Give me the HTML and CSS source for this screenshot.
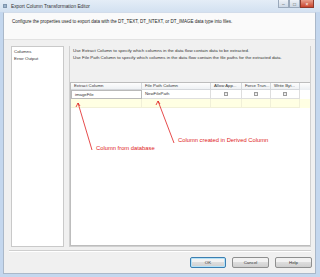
FILE: index.html
```html
<!DOCTYPE html>
<html lang="en">
<head>
<meta charset="utf-8">
<link rel="stylesheet" href="styles.css">
</head>
<body>
<div class="window">
  <div class="titlebar">
    <span class="appicon"></span>
    <span class="title">Export Column Transformation Editor</span>
    <div class="controls">
      <span class="ctl">&#8211;</span>
      <span class="ctl">&#9633;</span>
      <span class="ctl close">&#215;</span>
    </div>
  </div>
  <div class="client">
    <div class="desc">Configure the properties used to export data with the DT_TEXT, DT_NTEXT, or DT_IMAGE data type into files.</div>
    <div class="main">
      <div class="navlist">
        <div>Columns</div>
        <div>Error Output</div>
      </div>
      <div class="panel">
        <div class="panel-text">
          <div>Use Extract Column to specify which columns in the data flow contain data to be extracted.</div>
          <div>Use File Path Column to specify which columns in the data flow contain the file paths for the extracted data.</div>
        </div>
        <div class="grid">
          <div class="row head">
            <div class="cell">Extract Column</div>
            <div class="cell">File Path Column</div>
            <div class="cell">Allow App...</div>
            <div class="cell">Force Trun...</div>
            <div class="cell">Write Byt...</div>
          </div>
          <div class="row">
            <div class="cell sel">imageFile</div>
            <div class="cell">NewFilePath</div>
            <div class="cell chk"><span class="box"></span></div>
            <div class="cell chk"><span class="box"></span></div>
            <div class="cell chk"><span class="box"></span></div>
          </div>
          <div class="row newrow">
            <div class="cell"></div>
            <div class="cell"></div>
            <div class="cell"></div>
            <div class="cell"></div>
            <div class="cell"></div>
          </div>
        </div>
      </div>
    </div>
    <div class="sep"></div>
    <div class="buttons">
      <button class="btn default">OK</button>
      <button class="btn">Cancel</button>
      <button class="btn">Help</button>
    </div>
  </div>

  <svg class="arrows" width="320" height="277" viewBox="0 0 320 277">
    <g stroke="#e02020" stroke-width="0.8" fill="none">
      <line x1="92" y1="150" x2="78" y2="103"/>
      <polyline points="76,107 78,103 80,106"/>
      <line x1="174" y1="143" x2="158" y2="101"/>
      <polyline points="156,105 158,101 160,104"/>
    </g>
  </svg>
  <span class="note note1">Column from database</span>
  <span class="note note2">Column created in Derived Column</span>
</div>
</body>
</html>
```

FILE: styles.css
```css
* {box-sizing: border-box;}
body {margin: 0; font-family: "Liberation Sans", Arial, sans-serif;}
.window {position: relative; width: 320px; height: 277px; background: #c4d7ee; overflow: hidden; display: flex; flex-direction: column;}
.titlebar {height: 12px; display: flex; align-items: center; padding-left: 3px; background: linear-gradient(#e4edf7, #d3e1f1);}
.appicon {width: 4px; height: 4px; background: #9cb3cc; border: 1px solid #7f95ad; margin-right: 4px;}
.title {font-size: 4.8px; color: #333;}
.controls {margin-left: auto; margin-right: 6px; display: flex; align-self: flex-start; height: 8px;}
.ctl {width: 11px; font-size: 5px; line-height: 8px; text-align: center; color: #555; background: linear-gradient(#eef2f7, #cdd8e5); border: 1px solid #9aa9bb; border-top: 0;}
.ctl.close {width: 14px; color: #fff; background: linear-gradient(#e8a08e, #c9452d); border-color: #8e3a2c;}

.client {flex: 1; margin: 0 4px 3px 3px; background: #f0f0f0; display: flex; flex-direction: column; border: 1px solid #aab8c9; border-top-color: #d2dcea;}
.desc {height: 27px; background: #fafafa; font-size: 4.5px; color: #222; padding: 6px 8px 0; border-bottom: 1px solid #e2e2e2;}
.main {flex: 1; display: flex; gap: 5px; padding: 6px 4px 0 7px;}
.navlist {width: 53px; background: #fff; border: 1px solid #c9c9c9; font-size: 4.4px; color: #333; padding: 1px 2px; line-height: 7px;}
.panel {flex: 1; display: flex; flex-direction: column; border: 1px solid #d0d0d0; border-top: 0;}
.panel-text {height: 36px; font-size: 4.4px; color: #333; padding: 1px 3px; line-height: 7px;}
.grid {flex: 1; background: #fff; border: 1px solid #bdbdbd; border-right: 0;}
.row {display: grid; grid-template-columns: 71px 69px 31px 29px 29px; height: 9px;}
.row.head {height: 7px; background: linear-gradient(#fdfdfd, #eceff2);}
.cell {font-size: 4.3px; color: #333; line-height: 7px; padding-left: 3px; border-right: 1px solid #dedede; border-bottom: 1px solid #dedede; white-space: nowrap; overflow: hidden;}
.head .cell {border-color: #d4d7db; line-height: 6px;}
.row:not(.head) .cell {line-height: 8px;}
.cell.sel {border: 1px solid #b9b9b9; line-height: 7px;}
.cell.chk {display: flex; align-items: center; justify-content: center; padding: 0;}
.box {width: 4px; height: 4px; border: 1px solid #9c9c9c; background: linear-gradient(#e2e2e2, #f6f6f6);}
.row.newrow {height: 9px; background: #ffffe3;}
.newrow .cell {border-color: #f1f0d8;}

.sep {height: 2px; margin: 3px 4px 0 5px; border-top: 1px solid #cfcfcf; border-bottom: 1px solid #fff;}
.buttons {display: flex; justify-content: flex-end; gap: 6px; padding: 5px 3px 5px 0;}
.btn {width: 37px; height: 11px; padding: 0; font-family: "Liberation Sans", Arial, sans-serif; font-size: 4.4px; color: #333; border: 1px solid #8e8f8f; border-radius: 2px; background: linear-gradient(#f2f2f2 50%, #dddddd 50%, #cfcfcf);}
.btn.default {width: 36px; border-color: #3c7fb1; box-shadow: inset 0 0 0 1px #b6e2f7;}

.arrows {position: absolute; left: 0; top: 0;}
.note {position: absolute; font-size: 5.8px; color: #e02020; white-space: nowrap;}
.note1 {left: 96px; top: 145px;}
.note2 {left: 178px; top: 137px;}
```
